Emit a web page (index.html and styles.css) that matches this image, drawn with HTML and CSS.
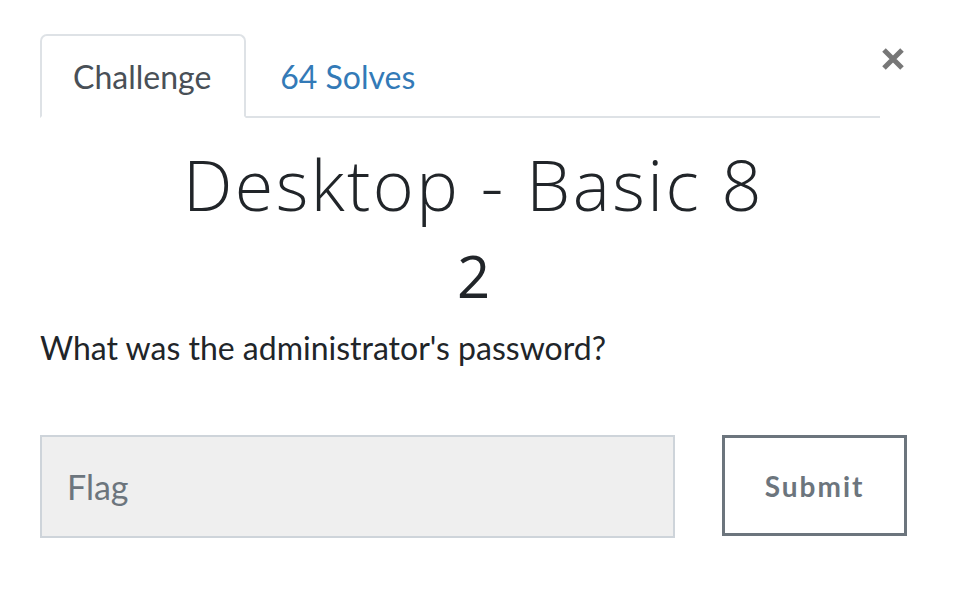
FILE: index.html
```html
<!DOCTYPE html>
<html>
<head>
<meta charset="utf-8">
<link rel="stylesheet" href="styles.css">
</head>
<body>
<div class="modal">
  <div class="header">
    <ul class="tabs">
      <li class="tab active">Challenge</li>
      <li class="tab link">64 Solves</li>
    </ul>
    <button class="close" aria-label="Close">
      <svg width="26" height="26" viewBox="0 0 26 26"><path d="M4 4 L22 22 M22 4 L4 22" stroke="#777" stroke-width="5" stroke-linecap="butt"/></svg>
    </button>
  </div>
  <h2 class="title">Desktop - Basic 8</h2>
  <h3 class="value">2</h3>
  <p class="question">What was the administrator's password?</p>
  <form class="answer">
    <input class="flag" type="text" placeholder="Flag">
    <button class="submit" type="button">Submit</button>
  </form>
</div>
</body>
</html>
```
FILE: styles.css
```css
* { box-sizing: border-box; }
html, body { margin: 0; padding: 0; background: #fff; }
body { font-family: Lato, "Liberation Sans", sans-serif; color: #212529; }
.modal { padding: 34px 49px 0 40px; }
.header { display: flex; align-items: flex-start; }
.tabs { flex: 0 0 840px; display: flex; margin: 0; padding: 0; list-style: none; border-bottom: 2px solid #dee2e6; height: 84px; }
.tab { font-size: 32px; height: 84px; line-height: 82px; padding: 0 32px; border: 2px solid transparent; border-top-left-radius: 7px; border-top-right-radius: 7px; }
.tab.active { color: #495057; border-color: #dee2e6 #dee2e6 #fff; background: #fff; margin-bottom: -2px; padding: 0 33px 0 31px; }
.tab.link { color: #337ab7; }
.close { margin: 12px 0 0 0; padding: 0; border: 0; background: none; width: 27px; height: 27px; display: flex; }
.title { margin: 24px 0 0; text-align: center; font-family: "Open Sans", sans-serif; font-weight: 300; font-size: 70px; line-height: 84px; letter-spacing: 2.4px; color: #212529; }
.value { margin: 10px 0 0; text-align: center; font-family: "Open Sans", sans-serif; font-weight: 400; font-size: 58px; line-height: 80px; color: #212529; }
.question { margin: 12px 0 0; font-size: 32px; line-height: 40px; color: #212529; }
.answer { display: flex; gap: 47px; margin-top: 67px; }
.flag { width: 636px; height: 103px; background: #efefef; border: 2px solid #ced4da; padding: 0 25px; font-family: Lato, sans-serif; font-size: 34px; color: #495057; }
.flag::placeholder { color: #6c757d; }
.submit { width: 185px; height: 101px; background: #fff; border: 3px solid #6c757d; color: #6c757d; font-family: Lato, sans-serif; font-weight: 700; font-size: 28px; letter-spacing: 2px; }
```
